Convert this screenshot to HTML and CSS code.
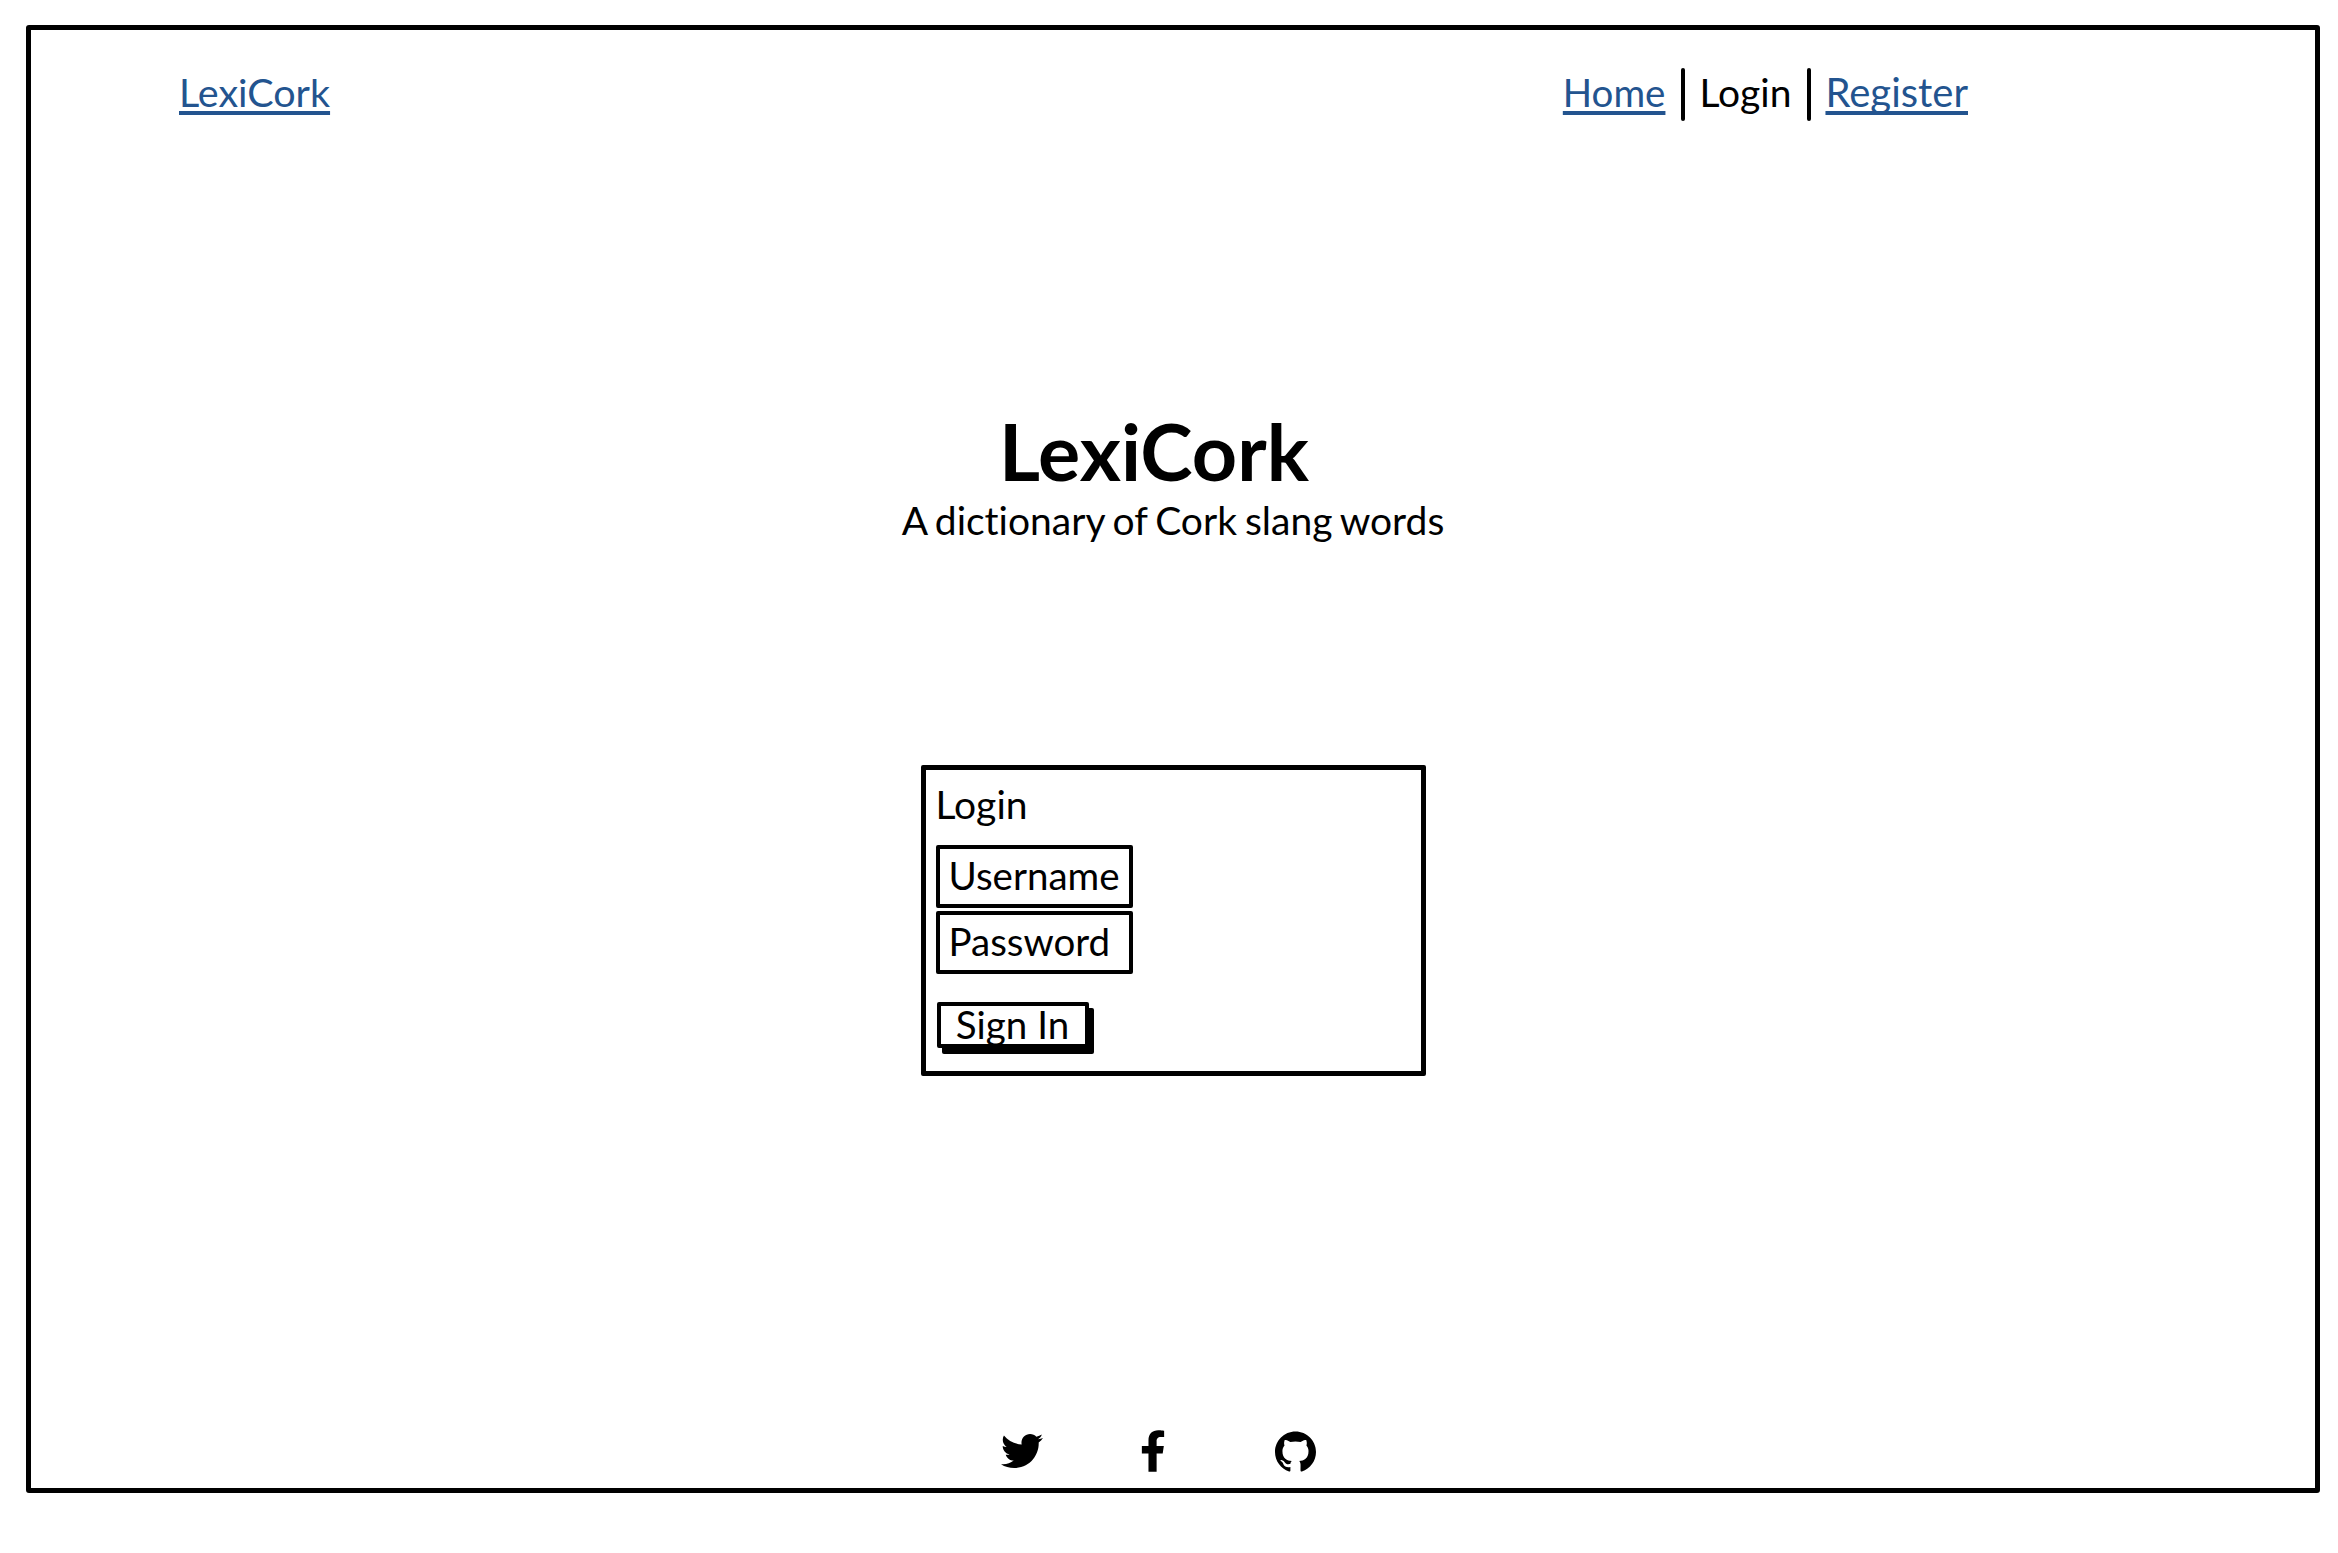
FILE: index.html
```html
<!DOCTYPE html>
<html lang="en">
<head>
<meta charset="UTF-8" />
<meta name="viewport" content="width=device-width, initial-scale=1" />
<title>LexiCork</title>
<link rel="stylesheet" href="styles.css">
</head>
<body>
<div class="frame">
    <header class="topbar">
        <a href="#" class="brand">LexiCork</a>
        <nav class="menu">
            <a href="#" class="menu-home">Home</a>
            <span class="sep"></span>
            <span class="menu-current">Login</span>
            <span class="sep"></span>
            <a href="#" class="menu-register">Register</a>
        </nav>
    </header>

    <section class="hero">
        <h1>LexiCork</h1>
        <p>A dictionary of Cork slang words</p>
    </section>

    <form class="login-box">
        <div class="login-title">Login</div>
        <input type="text" placeholder="Username" />
        <input type="password" placeholder="Password" />
        <button type="button">Sign In</button>
    </form>

    <footer class="social">
        <svg class="icon-twitter" viewBox="0 0 512 512"><path d="M459.37 151.716c.325 4.548.325 9.097.325 13.645 0 138.72-105.583 298.558-298.558 298.558-59.452 0-114.68-17.219-161.137-47.106 8.447.974 16.568 1.299 25.34 1.299 49.055 0 94.213-16.568 130.274-44.832-46.132-.975-84.792-31.188-98.112-72.772 6.498.974 12.995 1.624 19.818 1.624 9.421 0 18.843-1.3 27.614-3.573-48.081-9.747-84.143-51.98-84.143-102.985v-1.299c13.969 7.797 30.214 12.67 47.431 13.319-28.264-18.843-46.781-51.005-46.781-87.391 0-19.492 5.197-37.36 14.294-52.954 51.655 63.675 129.3 105.258 216.365 109.807-1.624-7.797-2.599-15.918-2.599-24.04 0-57.828 46.782-104.934 104.934-104.934 30.213 0 57.502 12.67 76.67 33.137 23.715-4.548 46.456-13.32 66.599-25.34-7.798 24.366-24.366 44.833-46.132 57.827 21.117-2.273 41.584-8.122 60.426-16.243-14.292 20.791-32.161 39.308-52.628 54.253z"/></svg>
        <svg class="icon-facebook" viewBox="0 0 320 512"><path d="M279.14 288l14.22-92.66h-88.91v-60.13c0-25.35 12.42-50.06 52.24-50.06h40.42V6.26S260.43 0 225.36 0c-73.22 0-121.08 44.38-121.08 124.72v70.62H22.89V288h81.39v224h100.17V288z"/></svg>
        <svg class="icon-github" viewBox="0 0 24 24"><path d="M12 .297c-6.63 0-12 5.373-12 12 0 5.303 3.438 9.8 8.205 11.385.6.113.82-.258.82-.577 0-.285-.01-1.04-.015-2.04-3.338.724-4.042-1.61-4.042-1.61C4.422 18.07 3.633 17.7 3.633 17.7c-1.087-.744.084-.729.084-.729 1.205.084 1.838 1.236 1.838 1.236 1.07 1.835 2.809 1.305 3.495.998.108-.776.417-1.305.76-1.605-2.665-.3-5.466-1.332-5.466-5.93 0-1.31.465-2.38 1.235-3.22-.135-.303-.54-1.523.105-3.176 0 0 1.005-.322 3.3 1.23.96-.267 1.98-.399 3-.405 1.02.006 2.04.138 3 .405 2.28-1.552 3.285-1.23 3.285-1.23.645 1.653.24 2.873.12 3.176.765.84 1.23 1.91 1.23 3.22 0 4.61-2.805 5.625-5.475 5.92.42.36.81 1.096.81 2.22 0 1.606-.015 2.896-.015 3.286 0 .315.21.69.825.57C20.565 22.092 24 17.592 24 12.297c0-6.627-5.373-12-12-12"/></svg>
    </footer>
</div>
</body>
</html>
```

FILE: styles.css
```css
html, body {
    margin: 0;
    background: #fff;
}

body {
    height: 1553px;
    padding: 25px 0 0 26px;
    box-sizing: border-box;
    overflow: hidden;
    color: #000;
    font-family: Lato, sans-serif;
    font-size: 40px;
    font-variant-ligatures: none;
}

.frame {
    width: 2294px;
    height: 1468px;
    box-sizing: border-box;
    border: 5px solid #000;
    border-radius: 3px;
    display: flex;
    flex-direction: column;
    align-items: center;
}

a {
    color: #23548f;
    text-decoration: underline;
    text-decoration-thickness: 4px;
    text-decoration-skip-ink: none;
    text-underline-offset: 4px;
}

.topbar {
    width: 100%;
    box-sizing: border-box;
    padding: 32px 347px 0 148px;
    display: flex;
    justify-content: space-between;
    align-items: center;
}

.brand {
    font-size: 39.5px;
}

.menu {
    display: flex;
    align-items: center;
    gap: 16px;
}

.menu-home {
    font-size: 38.5px;
}

.menu-current {
    font-size: 39px;
    margin-left: -2px;
}

.menu-register {
    margin-left: -2px;
}

.sep {
    width: 4px;
    height: 53px;
    margin-top: 6px;
    background: #000;
    border-radius: 2px;
}

.hero {
    width: 100%;
    margin-top: 285px;
    text-align: center;
}

.hero h1 {
    margin: 0 38px 0 0;
    font-size: 79px;
    font-weight: 700;
    line-height: 90px;
}

.hero p {
    margin: 0;
    font-size: 39px;
    word-spacing: -2px;
    line-height: 48px;
}

.login-box {
    width: 505px;
    height: 311px;
    box-sizing: border-box;
    margin-top: 221px;
    padding: 10px 10px;
    border: 5px solid #000;
    border-radius: 2px;
    display: flex;
    flex-direction: column;
    align-items: flex-start;
}

.login-title {
    font-size: 39px;
    line-height: 48px;
    margin-bottom: 17px;
}

.login-box input {
    width: 197px;
    height: 63px;
    box-sizing: border-box;
    margin: 0 0 3px;
    padding: 0 0 3px 9px;
    border: 4px solid #000;
    border-radius: 2px;
    background: #fff;
    font: 38.5px Lato, sans-serif;
    color: #000;
}

.login-box input::placeholder {
    color: #000;
    opacity: 1;
}

.login-box button {
    width: 152px;
    height: 46px;
    box-sizing: border-box;
    margin: 25px 0 0 1px;
    padding: 0 0 2px;
    border: 4px solid #000;
    border-radius: 2px;
    background: #fff;
    box-shadow: 5px 6px 0 #000;
    font: 38.5px/34px Lato, sans-serif;
    color: #000;
}

.social {
    margin-top: auto;
    padding: 0 0 16px 0;
    margin-right: 30px;
    display: flex;
    align-items: center;
}

.social svg {
    display: block;
    fill: #000;
}

.icon-twitter {
    width: 42px;
    height: 42px;
}

.icon-facebook {
    width: 26px;
    height: 42px;
    margin-left: 97px;
}

.icon-github {
    width: 41px;
    height: 41px;
    margin-left: 109px;
}
```
